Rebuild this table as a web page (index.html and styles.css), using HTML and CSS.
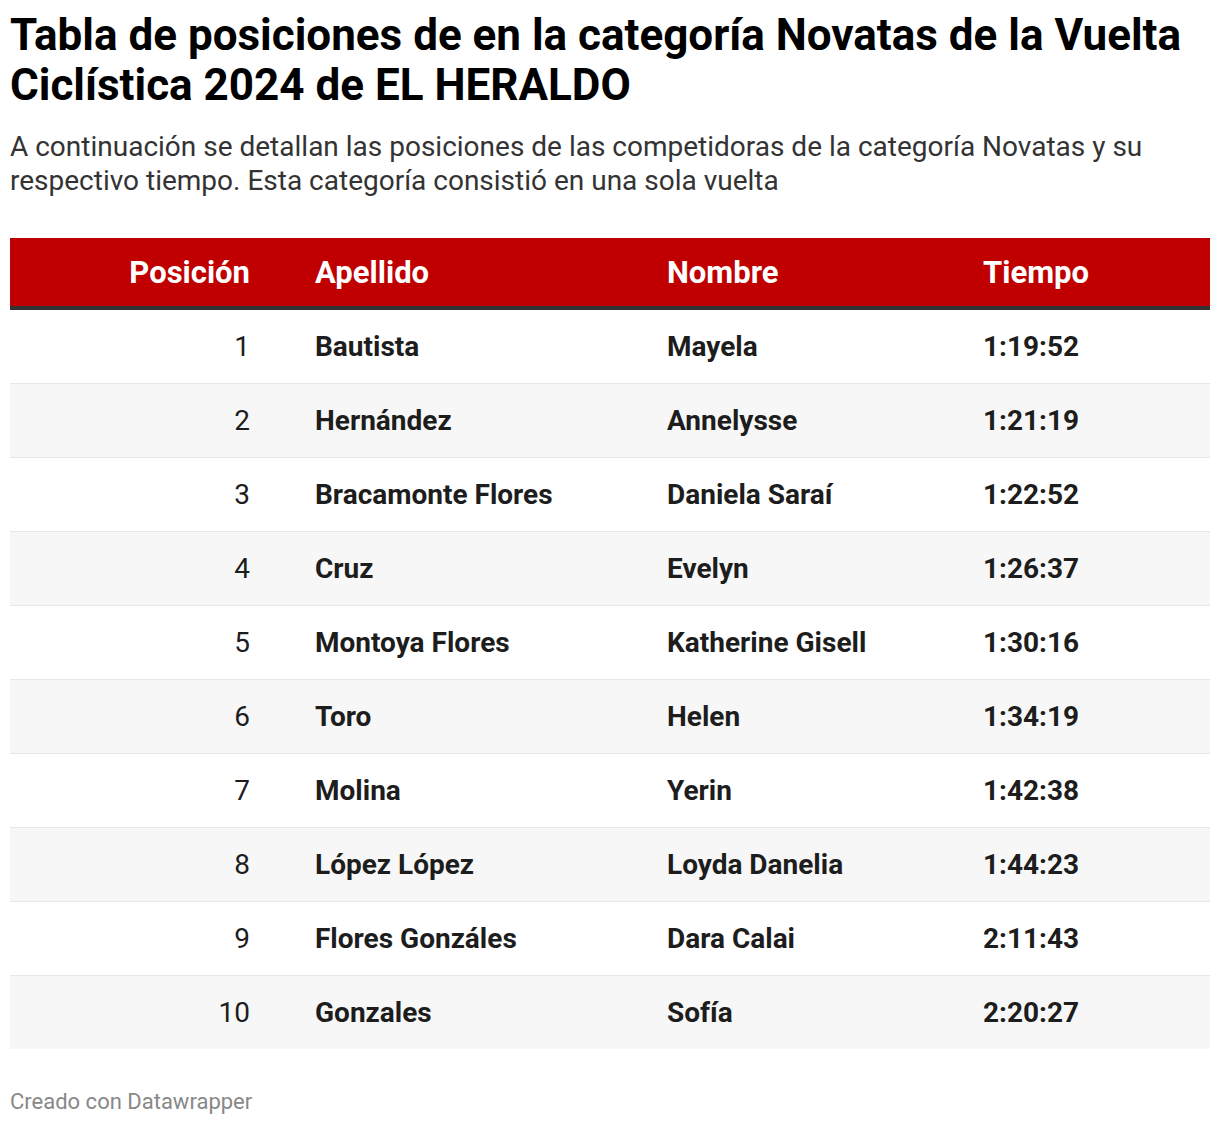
FILE: index.html
```html
<!DOCTYPE html>
<html lang="es">
<head>
<meta charset="utf-8">
<title>Tabla de posiciones</title>
<link rel="stylesheet" href="styles.css">
</head>
<body>
<div class="chart">
  <h1 class="title">Tabla de posiciones de en la categoría Novatas de la Vuelta Ciclística 2024 de EL HERALDO</h1>
  <p class="desc">A continuación se detallan las posiciones de las competidoras de la categoría Novatas y su respectivo tiempo. Esta categoría consistió en una sola vuelta</p>
  <div class="table">
    <div class="row head">
      <div class="cell pos">Posición</div>
      <div class="cell">Apellido</div>
      <div class="cell">Nombre</div>
      <div class="cell">Tiempo</div>
    </div>
    <div class="row"><div class="cell pos">1</div><div class="cell">Bautista</div><div class="cell">Mayela</div><div class="cell">1:19:52</div></div>
    <div class="row alt"><div class="cell pos">2</div><div class="cell">Hernández</div><div class="cell">Annelysse</div><div class="cell">1:21:19</div></div>
    <div class="row"><div class="cell pos">3</div><div class="cell">Bracamonte Flores</div><div class="cell">Daniela Saraí</div><div class="cell">1:22:52</div></div>
    <div class="row alt"><div class="cell pos">4</div><div class="cell">Cruz</div><div class="cell">Evelyn</div><div class="cell">1:26:37</div></div>
    <div class="row"><div class="cell pos">5</div><div class="cell">Montoya Flores</div><div class="cell">Katherine Gisell</div><div class="cell">1:30:16</div></div>
    <div class="row alt"><div class="cell pos">6</div><div class="cell">Toro</div><div class="cell">Helen</div><div class="cell">1:34:19</div></div>
    <div class="row"><div class="cell pos">7</div><div class="cell">Molina</div><div class="cell">Yerin</div><div class="cell">1:42:38</div></div>
    <div class="row alt"><div class="cell pos">8</div><div class="cell">López López</div><div class="cell">Loyda Danelia</div><div class="cell">1:44:23</div></div>
    <div class="row"><div class="cell pos">9</div><div class="cell">Flores Gonzáles</div><div class="cell">Dara Calai</div><div class="cell">2:11:43</div></div>
    <div class="row alt last"><div class="cell pos">10</div><div class="cell">Gonzales</div><div class="cell">Sofía</div><div class="cell">2:20:27</div></div>
  </div>
  <div class="footer">Creado con Datawrapper</div>
</div>
</body>
</html>
```
FILE: styles.css
```css
html, body {
  margin: 0;
  padding: 0;
  background: #ffffff;
}
body {
  font-family: Roboto, "Liberation Sans", sans-serif;
  color: #1d1d1d;
}
.chart {
  padding: 10px;
}
.title {
  margin: 0;
  font-size: 44px;
  line-height: 50px;
  font-weight: 700;
  color: #000;
}
.desc {
  margin: 20px 0 0;
  font-size: 28px;
  line-height: 34px;
  color: #333;
}
.table {
  margin-top: 40px;
}
.row {
  display: grid;
  grid-template-columns: 295px 352px 316px 1fr;
  height: 73px;
  align-items: center;
  border-bottom: 1px solid #e6e6e6;
  font-size: 28px;
  font-weight: 700;
}
.row.alt {
  background: #f7f7f7;
}
.row.last {
  border-bottom: none;
}
.row.head {
  height: 68px;
  background: #c00000;
  color: #fff;
  font-size: 31px;
  border-bottom: 4px solid #333;
}
.cell {
  padding: 0 10px;
  white-space: nowrap;
}
.cell.pos {
  text-align: right;
  padding-right: 55px;
}
.row:not(.head) .cell.pos {
  font-weight: 400;
}
.footer {
  margin-top: 40px;
  font-size: 22px;
  color: #888;
}
```
